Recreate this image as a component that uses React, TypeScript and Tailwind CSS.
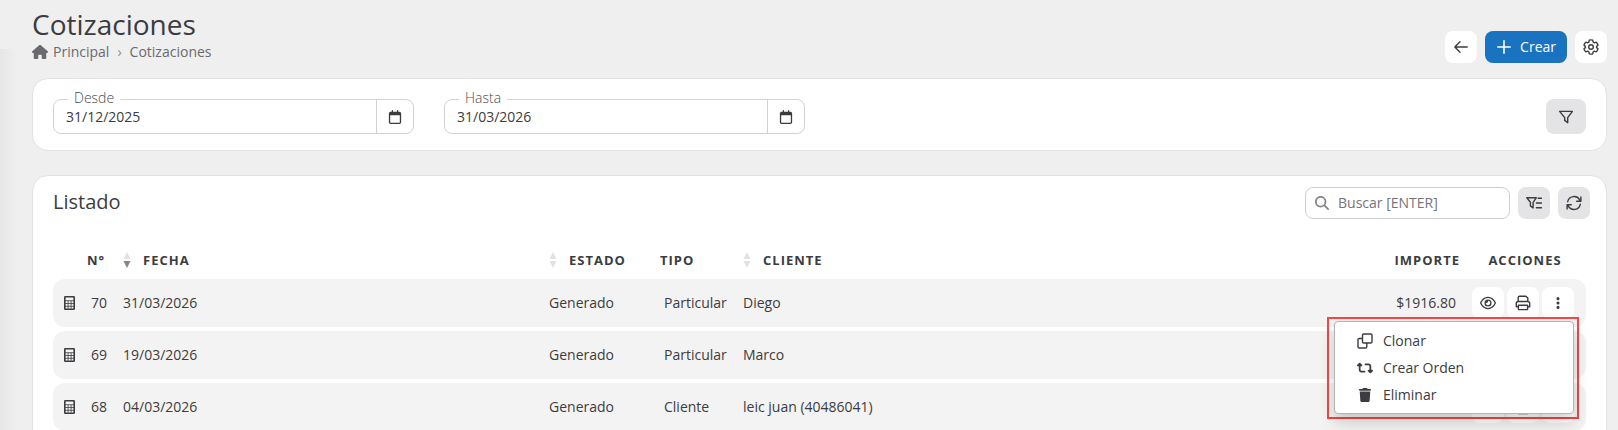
import React from 'react';
import { FaHouse, FaMagnifyingGlass, FaRegCalendar, FaRegEye, FaRetweet, FaTrash, FaEllipsisVertical } from 'react-icons/fa6';

const rows = [
  { id: 70, fecha: '31/03/2026', estado: 'Generado', tipo: 'Particular', cliente: 'Diego', importe: '$1916.80' },
  { id: 69, fecha: '19/03/2026', estado: 'Generado', tipo: 'Particular', cliente: 'Marco', importe: '' },
  { id: 68, fecha: '04/03/2026', estado: 'Generado', tipo: 'Cliente', cliente: 'leic juan (40486041)', importe: '' },
];

type IconProps = { className?: string; children?: React.ReactNode };

const Icon = ({ className = 'size-4', children }: IconProps) => (
  <svg
    viewBox="0 0 16 16"
    className={className}
    fill="none"
    stroke="currentColor"
    strokeWidth="1.4"
    strokeLinecap="round"
    strokeLinejoin="round"
    aria-hidden="true"
  >
    {children}
  </svg>
);

const ArrowLeftIcon = () => (
  <Icon>
    <path d="M14.2 8H1.8M7 2.8 1.8 8 7 13.2" />
  </Icon>
);

const PlusIcon = () => (
  <Icon>
    <path strokeWidth="1.6" d="M8 1.8v12.4M1.8 8h12.4" />
  </Icon>
);

const GearIcon = () => (
  <Icon>
    <path d="M6.3 1.2Q8 .5 9.7 1.2L10.1 3 11.4 3.8 13.2 3.2Q14.7 4.5 15 6.2L13.6 7.4V8.6L15 9.8Q14.7 11.5 13.2 12.8L11.4 12.2 10.1 13 9.7 14.8Q8 15.5 6.3 14.8L5.9 13 4.6 12.2 2.8 12.8Q1.3 11.5 1 9.8L2.4 8.6V7.4L1 6.2Q1.3 4.5 2.8 3.2L4.6 3.8 5.9 3Z" />
    <circle cx="8" cy="8" r="2.3" />
  </Icon>
);

const FilterIcon = () => (
  <Icon>
    <path d="M1.6 2.4h12.8L9.7 8.6v5.2L6.7 11.4V8.6Z" />
  </Icon>
);

const FilterListIcon = () => (
  <Icon>
    <path d="M.8 2.7h9.6L7.1 7.3v5.6L4.4 10.9V7.3ZM12.2 3.2h3.2M10.4 8h5M10.4 12.8h5" />
  </Icon>
);

const RefreshIcon = () => (
  <Icon>
    <path d="M1.7 6.7A6.5 6.5 0 0 1 13.6 4.7L14.8 6M14.9 2v4.2h-4.2M14.3 9.3A6.5 6.5 0 0 1 2.4 11.3L1.2 10M1.1 14V9.8h4.2" />
  </Icon>
);

const PrintIcon = () => (
  <Icon>
    <path d="M3.2 6.5V2.6q0-1.4 1.4-1.4h6.2l2 1.9v3.4M3.2 11.8H1.3V8.4q0-1.9 1.9-1.9h9.6q1.9 0 1.9 1.9v3.4h-1.9M3.4 10.2h9.2v4.4H3.4Z" />
  </Icon>
);

const CloneIcon = () => (
  <Icon>
    <path d="M6.8 1h6.9q1.3 0 1.3 1.3v6.4q0 1.3-1.3 1.3H6.8q-1.3 0-1.3-1.3V2.3Q5.5 1 6.8 1ZM5.5 5.5H2.3Q1 5.5 1 6.8v6.9Q1 15 2.3 15h6.2q1.3 0 1.3-1.3V10" />
  </Icon>
);

const CalculatorIcon = () => (
  <Icon>
    <rect x="2.8" y="1.8" width="9.4" height="12.4" rx=".5" strokeWidth="1.6" />
    <path strokeLinecap="butt" strokeWidth=".8" d="M3 5.7h9M3 8.5h9M3 11.3h9M6.1 5.7v8M9.1 5.7v8" />
  </Icon>
);

const SortIcon = ({ desc = false }: { desc?: boolean }) => (
  <svg viewBox="0 0 8 16" className="h-4 w-2 shrink-0" aria-hidden="true">
    <path d="M4 0 7.5 7h-7Z" fill="#e2e2e4" />
    <path d="M4 16 .5 9h7Z" fill={desc ? '#86868a' : '#e2e2e4'} />
  </svg>
);

const DateField = ({ id, label, value }: { id: string; label: string; value: string }) => (
  <div className="relative flex h-[35px] w-[361px] rounded-lg border border-[#d2d2d4]">
    <label htmlFor={id} className="absolute -top-3 left-[14px] bg-white px-1.5 font-light leading-5 text-[#4c4c50]">
      {label}
    </label>
    <input id={id} type="text" defaultValue={value} className="min-w-0 flex-1 rounded-l-lg bg-transparent px-3 outline-none" />
    <button type="button" aria-label={'Calendario ' + label} className="flex w-[37px] items-center justify-center border-l border-[#d2d2d4]">
      <FaRegCalendar className="size-[14px]" />
    </button>
  </div>
);

const ActionsMenu = () => (
  <div className="absolute -right-[5px] top-[30px] z-10 w-[252px] border-2 border-[#fa4444] pb-[3px] pl-[5px] pr-[3px] pt-[2px]">
    <ul className="rounded border border-[#b4b4b4] bg-white py-[5px] shadow-[0_8px_16px_rgba(0,0,0,0.18)]">
      <li>
        <button type="button" className="flex h-[27px] w-full items-center gap-[10px] pl-[22px]">
          <CloneIcon />
          Clonar
        </button>
      </li>
      <li>
        <button type="button" className="flex h-[27px] w-full items-center gap-[10px] pl-[22px]">
          <FaRetweet className="size-4" />
          Crear Orden
        </button>
      </li>
      <li>
        <button type="button" className="flex h-[27px] w-full items-center gap-[10px] pl-[22px]">
          <FaTrash className="h-[14px] w-4" />
          Eliminar
        </button>
      </li>
    </ul>
  </div>
);

const RowActions = ({ open }: { open: boolean }) => (
  <div className="relative flex w-fit gap-[3px]">
    <button type="button" aria-label="Ver" className="flex size-8 items-center justify-center rounded-lg bg-white">
      <FaRegEye className="size-4" />
    </button>
    <button type="button" aria-label="Imprimir" className="flex size-8 items-center justify-center rounded-lg bg-white">
      <PrintIcon />
    </button>
    <button type="button" aria-label="Más acciones" className="flex size-8 items-center justify-center rounded-lg bg-white">
      <FaEllipsisVertical className="size-[14px]" />
    </button>
    {open && <ActionsMenu />}
  </div>
);

const App = () => {
  return (
    <div className="flex h-screen overflow-hidden bg-[#efefef] font-['Open_Sans','Noto_Sans',sans-serif] text-sm text-[#3c3c40]">
      {/* Sombra del menú lateral */}
      <div className="mt-[49px] w-4 shrink-0 bg-gradient-to-r from-[#e6e6e6] to-[#efefef]"></div>

      <main className="min-w-0 flex-1 pl-4 pr-[11px]">
        <header className="mb-[15px] flex items-end justify-between pt-1.5">
          <div className="pb-px">
            <h1 className="text-[28px] leading-9">Cotizaciones</h1>
            <nav className="flex items-center leading-5 text-[#6a6a6e]">
              <a href="#principal" className="flex items-center gap-[5px]">
                <FaHouse className="size-4" />
                Principal
              </a>
              <span className="px-2 text-[#8c8c90]">›</span>
              <span>Cotizaciones</span>
            </nav>
          </div>
          <div className="flex gap-2">
            <button type="button" aria-label="Volver" className="flex size-8 items-center justify-center rounded-lg bg-white">
              <ArrowLeftIcon />
            </button>
            <button type="button" className="flex h-8 items-center gap-2 rounded-lg bg-[#1a73c0] px-[11px] font-medium text-white">
              <PlusIcon />
              Crear
            </button>
            <button type="button" aria-label="Configuración" className="flex size-8 items-center justify-center rounded-lg bg-white">
              <GearIcon />
            </button>
          </div>
        </header>

        {/* Filtros */}
        <section className="mb-6 flex items-center justify-between rounded-2xl border border-[#e2e2e2] bg-white px-5 pb-4 pt-5">
          <div className="flex gap-[30px]">
            <DateField id="desde" label="Desde" value="31/12/2025" />
            <DateField id="hasta" label="Hasta" value="31/03/2026" />
          </div>
          <button type="button" aria-label="Filtrar" className="flex h-[35px] w-10 items-center justify-center rounded-lg bg-[#e4e4e6]">
            <FilterIcon />
          </button>
        </section>

        {/* Listado */}
        <section className="rounded-2xl border border-[#e2e2e2] bg-white pb-5 pt-[11px]">
          <div className="flex items-start justify-between pl-5 pr-4">
            <h2 className="text-xl leading-[30px]">Listado</h2>
            <div className="flex gap-2">
              <label className="flex h-8 w-[205px] items-center gap-[9px] rounded-lg border border-[#cfcfd1] px-[9px]">
                <FaMagnifyingGlass className="size-[14px] shrink-0 text-[#848488]" />
                <input
                  type="text"
                  aria-label="Buscar"
                  placeholder="Buscar [ENTER]"
                  className="w-full min-w-0 outline-none placeholder:text-[#74747a]"
                />
              </label>
              <button type="button" aria-label="Filtros" className="flex size-8 items-center justify-center rounded-lg bg-[#e4e4e6]">
                <FilterListIcon />
              </button>
              <button type="button" aria-label="Actualizar" className="flex size-8 items-center justify-center rounded-lg bg-[#e4e4e6]">
                <RefreshIcon />
              </button>
            </div>
          </div>

          <div className="mt-[22px] px-5">
            <table className="w-full table-fixed border-separate border-spacing-x-0 border-spacing-y-1">
              <thead>
                <tr className="h-[30px] text-left text-[13px] tracking-[1px]">
                  <th className="w-[30px]"></th>
                  <th className="w-8 pl-1">N°</th>
                  <th className="w-[426px] pl-2">
                    <span className="flex items-center gap-3">
                      <SortIcon desc />
                      FECHA
                    </span>
                  </th>
                  <th className="w-[111px] pl-2">
                    <span className="flex items-center gap-3">
                      <SortIcon />
                      ESTADO
                    </span>
                  </th>
                  <th className="w-[83px] pl-2">TIPO</th>
                  <th className="pl-2">
                    <span className="flex items-center gap-3">
                      <SortIcon />
                      CLIENTE
                    </span>
                  </th>
                  <th className="w-[90px] pr-1 text-right">IMPORTE</th>
                  <th className="w-[122px] text-center">ACCIONES</th>
                </tr>
              </thead>
              <tbody>
                {rows.map((row, i) => (
                  <tr key={row.id} className="h-12 bg-[#f3f3f3]">
                    <td className="rounded-l-xl pl-[9px]">
                      <CalculatorIcon />
                    </td>
                    <td className="text-center">{row.id}</td>
                    <td className="px-2">{row.fecha}</td>
                    <td className="px-2">{row.estado}</td>
                    <td className="pl-3">{row.tipo}</td>
                    <td className="px-2">{row.cliente}</td>
                    <td className="pr-2 text-right">{row.importe}</td>
                    <td className="rounded-r-xl pl-2">
                      <RowActions open={i === 0} />
                    </td>
                  </tr>
                ))}
              </tbody>
            </table>
          </div>
        </section>
      </main>
    </div>
  );
};

export default App;
